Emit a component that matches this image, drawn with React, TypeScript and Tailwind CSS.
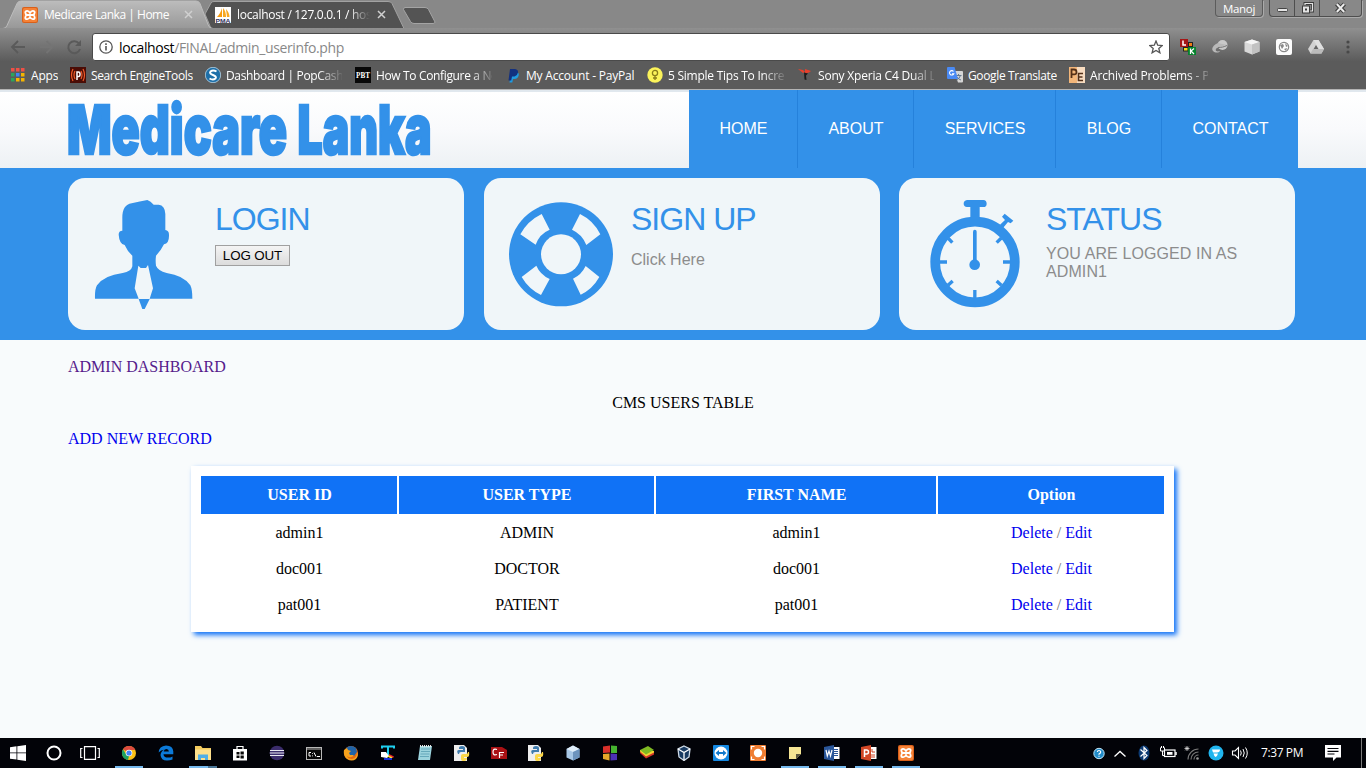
import React from "react";

const BLUE = "#3391e9";

/* ---------- Browser chrome ---------- */

function XamppIcon() {
  return (
    <svg width="16" height="16" viewBox="0 0 16 16">
      <rect width="16" height="16" rx="2" fill="#d9601a" />
      <rect x="1" y="1" width="14" height="14" rx="1.5" fill="#f58237" />
      <path
        d="M8 8H5.200Q3.300 7.500 3.300 5.600 3.300 3.800 5.200 3.800 7 3.800 8 6 9 3.800 10.800 3.800 12.700 3.800 12.700 5.600 12.700 7.500 10.800 8H5.200Q3.300 8.500 3.300 10.400 3.300 12.200 5.200 12.200 7 12.200 8 10 9 12.200 10.800 12.200 12.700 12.200 12.700 10.400 12.700 8.500 10.800 8"
        fill="none"
        stroke="#fff"
        strokeWidth="1.800"
      />
    </svg>
  );
}

function PmaIcon() {
  return (
    <svg width="16" height="16" viewBox="0 0 16 16">
      <rect width="16" height="16" fill="#fff" />
      <path d="M7 1v9H2C4 8 6 5 7 1z" fill="#f89c0e" />
      <path d="M8 1c2 2 3 5 3 9H8zM11 2c2 2 3.500 5 3.500 8H12z" fill="#f7a823" />
      <text x="0.500" y="15.700" fontSize="6" fontWeight="700" textLength="15" lengthAdjust="spacingAndGlyphs" fontFamily="Liberation Sans, sans-serif" fill="#32315c">PMA</text>
    </svg>
  );
}

function CloseX() {
  return (
    <svg width="9" height="9" viewBox="0 0 9 9">
      <path d="M1 1l7 7M8 1L1 8" stroke="#d0d0d0" strokeWidth="1.500" />
    </svg>
  );
}

function TabStrip() {
  return (
    <div className="relative flex h-[28px] bg-[#888888]">
      <svg className="absolute inset-0" width="1366" height="29" viewBox="0 0 1366 29">
        <defs>
          <linearGradient id="tab" x1="0" y1="0" x2="0" y2="1">
            <stop offset="0" stopColor="#bcbcbc" />
            <stop offset="1" stopColor="#989898" />
          </linearGradient>
        </defs>
        <path d="M0 28.500h5M211 28.500h1155" stroke="#a9a9a9" />
        <path d="M205 14l6-11q1-1.500 3-1.500h174q3 0 4 2L404 28.500H211z" fill="#525252" stroke="#a2a2a2" />
        <path d="M0 28.500h3q3 0 4-3L17 3.500q1-2.500 4-2.500h175q3 0 4 2.500l8 21q1 4 5 4" fill="url(#tab)" stroke="#bdbdbd" />
        <path d="M405 7.500h20q2.500 0 3.500 2l6.500 12.500q0 1.500-2 1.500h-19q-2.500 0-3.500-2l-7-12q0-2 1.500-2z" fill="#545454" stroke="#a4a4a4" />
      </svg>
      <div className="relative flex h-[29px] w-[211px] items-center pl-[22px] pr-[18px]">
        <XamppIcon />
        <span className="ml-[6px] grow whitespace-nowrap text-[12px] tracking-[-0.480px] text-white">Medicare Lanka | Home</span>
        <CloseX />
      </div>
      <div className="relative flex h-[29px] w-[190px] items-center pl-[4px] pr-[15px]">
        <PmaIcon />
        <span className="ml-[6px] w-[133px] overflow-hidden whitespace-nowrap text-[12px] tracking-[-0.300px] text-white [mask-image:linear-gradient(to_right,#000_112px,transparent_133px)]">
          localhost / 127.0.0.1 / host
        </span>
        <span className="ml-[7px] flex"><CloseX /></span>
      </div>
      <div className="relative ml-auto flex h-[17px] pr-[4px]">
        <div className="mr-[6px] flex w-[48px] items-center justify-center rounded-b-[4px] border border-t-0 border-[#5c5c5c] text-[11.500px] tracking-[-0.300px] text-white shadow-[1px_1px_0_#aaaaaa]">
          <span className="pt-[2px] leading-[14px]">Manoj</span>
        </div>
        <div className="flex w-[93px] rounded-b-[4px] border border-t-0 border-[#4e4e4e] shadow-[1px_1px_0_#aaaaaa]">
          <div className="flex w-[25px] items-center justify-center border-r border-[#4e4e4e]">
            <svg width="13" height="16" viewBox="0 0 13 16"><rect x="1.500" y="8.500" width="10" height="3" rx="1" fill="#e4e4e4" stroke="#444" /></svg>
          </div>
          <div className="flex w-[25px] items-center justify-center border-r border-[#4e4e4e]">
            <svg width="14" height="16" viewBox="0 0 14 16">
              <path d="M5 5V3.500h7.500V11H10" fill="none" stroke="#3c3c3c" strokeWidth="3" />
              <path d="M5 5V3.500h7.500V11H10" fill="none" stroke="#e4e4e4" strokeWidth="1.200" />
              <rect x="2.500" y="6" width="7" height="7" fill="#e4e4e4" stroke="#3c3c3c" />
              <rect x="5" y="8.500" width="2" height="2" fill="#3c3c3c" />
            </svg>
          </div>
          <div className="flex grow items-center justify-center">
            <svg width="13" height="16" viewBox="0 0 13 16">
              <path d="M2.500 4l8 8M10.500 4l-8 8" stroke="#3c3c3c" strokeWidth="4" />
              <path d="M2.800 4l7.400 8M10.200 4l-7.400 8" stroke="#ececec" strokeWidth="2" />
            </svg>
          </div>
        </div>
      </div>
    </div>
  );
}

function Toolbar() {
  return (
    <div className="relative flex h-[33px] items-center bg-gradient-to-b from-[#909090] to-[#5c5c5c] pt-[5px]">
      <svg className="ml-[10px]" width="76" height="18" viewBox="0 0 76 18">
        <path d="M15 9H2.500M8 3L2 9l6 6" fill="none" stroke="#5a5a5a" strokeWidth="1.800" />
        <path d="M30 9h12M36.500 3l6 6-6 6" fill="none" stroke="#747474" strokeWidth="1.800" />
        <path d="M69 5.500a6 6 0 1 0 1 5.500" fill="none" stroke="#5a5a5a" strokeWidth="2" />
        <path d="M71 2v6h-6z" fill="#5a5a5a" />
      </svg>
      <div className="ml-[6px] flex h-[28px] w-[1078px] items-center rounded-[3px] border border-[#4a4a4a] bg-white px-[6px]">
        <svg width="14" height="14" viewBox="0 0 14 14">
          <circle cx="7" cy="7" r="6.200" fill="none" stroke="#555" strokeWidth="1.300" />
          <path d="M7 6v4.500M7 3.300v1.600" stroke="#555" strokeWidth="1.600" />
        </svg>
        <span className="ml-[6px] grow whitespace-nowrap text-[14px] tracking-[-0.380px] text-[#888]">
          <span className="text-black">localhost</span>/FINAL/admin_userinfo.php
        </span>
        <svg width="14" height="14" viewBox="0 0 14 14">
          <path d="M7 1l1.700 4.200 4.600.3-3.500 2.900 1.100 4.400L7 10.400l-3.900 2.400 1.100-4.400L.7 5.500l4.600-.3z" fill="none" stroke="#555" strokeWidth="1.300" />
        </svg>
      </div>
      <div className="ml-[10px] flex gap-[16px]">
        <svg width="16" height="16" viewBox="0 0 16 16">
          <rect width="8" height="8" fill="#a51616" />
          <path d="M3 1.500V6h3" stroke="#fff" strokeWidth="1.500" fill="none" />
          <rect x="8.500" y="3.500" width="4" height="4" fill="#f27c13" stroke="#222" />
          <rect x="3.500" y="8.500" width="4.500" height="3.500" fill="#f7dc18" stroke="#222" />
          <rect x="8" y="8" width="8" height="8" fill="#07832e" />
          <path d="M10.500 9.500V15M14 9.500L11 12l3 3" stroke="#fff" strokeWidth="1.200" fill="none" />
        </svg>
        <svg width="16" height="16" viewBox="0 0 16 16">
          <circle cx="10.500" cy="6" r="5" fill="#c9c9c9" />
          <path d="M6 4C1 6-1 10 1 12s6 2 7 0c-3 1-5 0-4-2s7-3 11-4" fill="#b9b9b9" />
          <path d="M6 8.500c3 0 6-.500 9-2" stroke="#777" fill="none" />
        </svg>
        <svg width="16" height="16" viewBox="0 0 16 16">
          <path d="M8 .5l7.500 2.500v9.500L8 15.500.5 12.500V3z" fill="#d8d8d8" />
          <path d="M8 .5l7.500 2.500L8 5.500.5 3z" fill="#f5f5f5" />
          <path d="M8 5.500l7.500-2.500v9.500L8 15.500z" fill="#c2c2c2" />
        </svg>
        <svg width="16" height="16" viewBox="0 0 16 16">
          <rect width="16" height="16" rx="2" fill="#fcfcfc" />
          <circle cx="8" cy="8" r="4.700" fill="none" stroke="#888" strokeWidth="1.200" />
          <path d="M4 6l3-1 1 2-2 3zM9 4l3 3-2 1zM8 10l3-1-1 3z" fill="#888" />
        </svg>
        <svg width="16" height="16" viewBox="0 0 16 16">
          <path d="M5.500 1h5L16 10l-2.500 4.500h-11L0 10z" fill="#d2d2d2" />
          <path d="M10.500 1L16 10h-5L5.500 1z" fill="#e0e0e0" />
          <path d="M8 6l2.400 4H5.600z" fill="#666" />
          <path d="M2.500 14.500L5 10h11l-2.500 4.500z" fill="#bbb" />
        </svg>
      </div>
      <svg className="ml-[22px]" width="4" height="14" viewBox="0 0 4 14">
        <circle cx="2" cy="2" r="1.600" fill="#484848" />
        <circle cx="2" cy="7" r="1.600" fill="#484848" />
        <circle cx="2" cy="12" r="1.600" fill="#484848" />
      </svg>
    </div>
  );
}

const bm = "h-4 w-4 shrink-0";

const bookmarks = [
  {
    width: "w-[60px]",
    label: "Apps",
    text: "tracking-[-0.200px]",
    icon: (
      <svg className={bm} viewBox="0 0 16 16">
        <rect x="1" y="1" width="3.500" height="3.500" fill="#ef5046" />
        <rect x="6" y="1" width="3.500" height="3.500" fill="#ef5046" />
        <rect x="11" y="1" width="3.500" height="3.500" fill="#ef5046" />
        <rect x="1" y="6" width="3.500" height="3.500" fill="#2ca45a" />
        <rect x="6" y="6" width="3.500" height="3.500" fill="#4285f4" />
        <rect x="11" y="6" width="3.500" height="3.500" fill="#f5b400" />
        <rect x="1" y="11" width="3.500" height="3.500" fill="#2ca45a" />
        <rect x="6" y="11" width="3.500" height="3.500" fill="#f5b400" />
        <rect x="11" y="11" width="3.500" height="3.500" fill="#f5b400" />
      </svg>
    ),
  },
  {
    width: "w-[135px]",
    label: "Search EngineTools",
    text: "tracking-[-0.380px]",
    icon: (
      <svg className={bm} viewBox="0 0 16 16">
        <rect width="16" height="16" fill="#4a0d06" />
        <path d="M3 2Q0 8 3 14M5 4q-2 4 0 8M13 2q3 6 0 12M11 4q2 4 0 8" fill="none" stroke="#ef5a28" strokeWidth="1.200" />
        <path d="M7 13V5h1.500Q10 5 10 7.300T8.500 9.500H7" fill="none" stroke="#fff" strokeWidth="1.500" />
      </svg>
    ),
  },
  {
    width: "w-[150px]",
    label: "Dashboard | PopCash.net",
    text: "w-[116px] tracking-[-0.350px] [mask-image:linear-gradient(to_right,#000_92px,transparent_118px)]",
    icon: (
      <svg className={bm} viewBox="0 0 16 16">
        <circle cx="8" cy="8" r="7.700" fill="#1e6fa8" stroke="#cfe6f5" strokeWidth=".7" />
        <path d="M11.500 4.500Q8 2.500 5.500 4.500 4 6.500 8 8t2.500 3.500Q8 13.500 4.500 11.500" fill="none" stroke="#fff" strokeWidth="2" />
      </svg>
    ),
  },
  {
    width: "w-[150px]",
    label: "How To Configure a New",
    text: "w-[116px] tracking-[-0.350px] [mask-image:linear-gradient(to_right,#000_94px,transparent_120px)]",
    icon: (
      <svg className={bm} viewBox="0 0 16 16">
        <rect width="16" height="16" fill="#080808" />
        <text x="1" y="11" fontSize="8" fontWeight="700" textLength="14" lengthAdjust="spacingAndGlyphs" fontFamily="Liberation Serif, serif" fill="#fff">PBT</text>
      </svg>
    ),
  },
  {
    width: "w-[142px]",
    label: "My Account - PayPal",
    text: "tracking-[-0.200px]",
    icon: (
      <svg className={bm} viewBox="0 0 16 16">
        <path d="M6 5h6q2.500 1 1.500 4t-4 3H8l-.7 3.500H4.500z" fill="#1f9ae0" />
        <path d="M5 2h5q3.500.5 3 3.500T9.500 9.500H7l-.8 4H3.500z" fill="#12307f" />
      </svg>
    ),
  },
  {
    width: "w-[150px]",
    label: "5 Simple Tips To Increase",
    text: "w-[116px] tracking-[-0.250px] [mask-image:linear-gradient(to_right,#000_94px,transparent_120px)]",
    icon: (
      <svg className={bm} viewBox="0 0 16 16">
        <circle cx="8" cy="8" r="7.700" fill="#fbf35a" />
        <circle cx="8" cy="6" r="2.600" fill="none" stroke="#8a7d1a" strokeWidth="1.300" />
        <path d="M8 8.500V13M6 11h4" stroke="#8a7d1a" strokeWidth="1.300" />
      </svg>
    ),
  },
  {
    width: "w-[150px]",
    label: "Sony Xperia C4 Dual LTE",
    text: "w-[116px] tracking-[-0.200px] [mask-image:linear-gradient(to_right,#000_92px,transparent_120px)]",
    icon: (
      <svg className={bm} viewBox="0 0 16 16">
        <path d="M1 2l5 1 2 2-2 1zM8 2l6 2-2 1.500-4 1z" fill="#e8402c" />
        <path d="M7 5.500l4 1-2 2 .5 4.500-2-.5z" fill="#1c1c1c" />
      </svg>
    ),
  },
  {
    width: "w-[122px]",
    label: "Google Translate",
    text: "tracking-[-0.350px]",
    icon: (
      <svg className={bm} viewBox="0 0 16 16">
        <path d="M7 4h8q1 0 1 1v9.500q0 1-1 1h-4z" fill="#d6d6d6" />
        <path d="M8.500 8.500h6M11.500 7v1.500M13.500 8.500q-1 3-4 4.500M10 10q1 2 4 3" stroke="#64788f" fill="none" />
        <path d="M1 0h6.500l3.500 12H1q-1 0-1-1V1q0-1 1-1z" fill="#4a8af4" />
        <path d="M6.500 4.500a2.200 2.200 0 1 0 .3 2.200H5" fill="none" stroke="#fff" strokeWidth="1.100" />
      </svg>
    ),
  },
  {
    width: "w-[139px]",
    label: "Archived Problems - Project",
    text: "w-[118px] tracking-[-0.150px] [mask-image:linear-gradient(to_right,#000_96px,transparent_124px)]",
    icon: (
      <svg className={bm} viewBox="0 0 16 16">
        <rect width="16" height="16" fill="#f3b67a" />
        <rect x="8" width="8" height="16" fill="#f8dcc0" />
        <path d="M2.500 11V2.500H5Q7.500 2.500 7.500 5T5 7.300H3" fill="none" stroke="#543018" strokeWidth="1.800" />
        <path d="M14 6.500H9.500v7H14M9.500 10h4" fill="none" stroke="#543018" strokeWidth="1.600" />
      </svg>
    ),
  },
];

function Bookmarks() {
  return (
    <div className="flex h-[29px] items-center border-b border-[#b4b4b4] bg-[#5b5b5b] pl-[10px]">
      {bookmarks.map((b) => (
        <div key={b.label} className={`flex shrink-0 items-center gap-[5px] ${b.width}`}>
          {b.icon}
          <span className={`overflow-hidden whitespace-nowrap text-[12px] leading-[17px] text-white ${b.text}`}>{b.label}</span>
        </div>
      ))}
    </div>
  );
}

/* ---------- Web page ---------- */

const nav = [
  { label: "HOME", cls: "w-[109px] border-r" },
  { label: "ABOUT", cls: "w-[116px] border-r" },
  { label: "SERVICES", cls: "w-[142px] border-r" },
  { label: "BLOG", cls: "w-[106px] border-r" },
  { label: "CONTACT", cls: "w-[136px]" },
];

function SiteHeader() {
  return (
    <header className="flex h-[78px] justify-between border-t-2 border-[#e1e8ee] bg-gradient-to-b from-white via-[#f9fafc] to-[#edf1f4] pl-[68px] pr-[68px] font-['Liberation_Sans',sans-serif]">
      <svg
        className="mt-[6px]"
        width="370"
        height="68"
        viewBox="0 0 370 68"
        fontFamily="Inter, Roboto, sans-serif"
        fontWeight="900"
        fontSize="68"
        fill={BLUE}
        stroke={BLUE}
        strokeWidth="2.500"
      >
        <text x="-1" y="56" textLength="220" lengthAdjust="spacingAndGlyphs">Medicare</text>
        <text x="229.500" y="56" textLength="134" lengthAdjust="spacingAndGlyphs">Lanka</text>
      </svg>
      <nav className="-mt-[2px] flex h-[78px] bg-[#3391e9]">
        {nav.map((n) => (
          <a key={n.label} className={`flex items-center justify-center border-[#2581db] pb-[1px] pl-[1px] text-[16px] text-white ${n.cls}`}>
            {n.label}
          </a>
        ))}
      </nav>
    </header>
  );
}

function PersonIcon() {
  return (
    <svg width="100" height="111" viewBox="132 333 300 333" fill={BLUE}>
      <path d="M217 428V392Q216 350 245 346Q270 340 292 336Q302 340 311 350H326Q345 352 346 378V426Q357 428 357 440Q358 466 342 469Q334 486 318 503Q316 520 318 533Q324 548 350 555Q400 562 421 592Q427 604 427 632H299L309 601L294 531L288 540H272L265 533L254 601L266 632H135Q134 604 141 592Q162 562 218 555Q244 550 247 535V503Q232 490 224 471Q208 468 206 440Q206 428 217 428Z" />
      <path d="M266 633H299L284 663H277Z" />
    </svg>
  );
}

function LifeRingIcon() {
  return (
    <svg width="106" height="106" viewBox="114 339 318 318">
      <circle cx="273" cy="499" r="156" fill={BLUE} />
      <circle cx="273" cy="499" r="60" fill="#f0f6f9" />
      <g fill="#f0f6f9">
        <path d="M215 378L239 425Q209 437 197 470L151 439Q172 399 215 378Z" />
        <path d="M330 378L306 425Q337 439 349 471L391 439Q371 398 330 378Z" />
        <path d="M155 567L199 533Q210 559 239 573L213 621Q176 603 155 567Z" />
        <path d="M388 567L347 534Q334 561 309 572L332 620Q367 604 388 567Z" />
      </g>
    </svg>
  );
}

function StopwatchIcon() {
  return (
    <svg width="92" height="109" viewBox="147 333 276 327">
      <ellipse cx="285" cy="522" rx="119.500" ry="121" fill="none" stroke={BLUE} strokeWidth="29" />
      <path d="M271 395V357H261Q251 356 251 347T261 336H310Q320 337 320 347T310 357H299V395Z" fill={BLUE} />
      <path d="M360 410L375 396L366 386L374 377L400 398L392 406L384 402L369 420Z" fill={BLUE} />
      <path d="M284.500 431V520" stroke={BLUE} strokeWidth="11" strokeLinecap="round" />
      <circle cx="284" cy="530" r="16" fill={BLUE} />
      <path
        d="M179 522H201M369 522H391M284.500 606V630M205 451L217 464M364 450L350 464M204 592L218 579M364 592L350 579"
        stroke={BLUE}
        strokeWidth="10"
      />
    </svg>
  );
}

function Card({ icon, iconCls, title, cls, children }: { icon: React.ReactNode; iconCls: string; title: string; cls: string; children: React.ReactNode }) {
  return (
    <section className={`flex h-[152px] w-[396px] shrink-0 rounded-[17px] bg-[#f0f6f9] ${cls}`}>
      <div className={`w-[147px] shrink-0 ${iconCls}`}>{icon}</div>
      <div className="pt-[23px]">
        <h2 className="text-[32px] leading-[37px] tracking-[-1px] text-[#3391e9]">{title}</h2>
        {children}
      </div>
    </section>
  );
}

function Banner() {
  return (
    <div className="flex h-[172px] bg-[#3391e9] pl-[68px] pt-[10px] font-['Liberation_Sans',sans-serif]">
      <Card cls="" icon={<PersonIcon />} iconCls="pl-[26px] pt-[21px]" title="LOGIN">
        <button className="mt-[7px] flex h-[21px] w-[75px] items-center justify-center whitespace-nowrap border border-[#a0a0a0] bg-gradient-to-b from-[#f4f4f4] to-[#dcdcdc] text-[13.333px] tracking-[-0.100px] text-black">
          LOG OUT
        </button>
      </Card>
      <Card cls="ml-[20px]" icon={<LifeRingIcon />} iconCls="pl-[24px] pt-[23px]" title="SIGN UP">
        <p className="mt-[13px] text-[16px] leading-[18px] text-[#8c8c8c]">Click Here</p>
      </Card>
      <Card cls="ml-[19px]" icon={<StopwatchIcon />} iconCls="pl-[30px] pt-[21px]" title="STATUS">
        <p className="mt-[7px] w-[200px] text-[16px] leading-[18px] tracking-[0.100px] text-[#8c8c8c]">YOU ARE LOGGED IN AS ADMIN1</p>
      </Card>
    </div>
  );
}

const users = [
  ["admin1", "ADMIN"],
  ["doc001", "DOCTOR"],
  ["pat001", "PATIENT"],
];

const cols = "grid grid-cols-[196px_255px_280px_226px] gap-x-[2px] text-center";

function UsersTable() {
  return (
    <div className="ml-[191px] mt-[18px] h-[166px] w-[983px] bg-white p-[10px] shadow-[3px_3px_5px_#1072f6]">
      <div className={`${cols} font-bold leading-[38px] text-white`}>
        {["USER ID", "USER TYPE", "FIRST NAME", "Option"].map((h) => (
          <div key={h} className="bg-[#1072f6] pl-[1px]">{h}</div>
        ))}
      </div>
      <div className="mt-[1px] pl-[0.500px]">
        {users.map(([id, type]) => (
          <div key={id} className={`${cols} leading-[36px] text-black`}>
            <div>{id}</div>
            <div>{type}</div>
            <div>{id}</div>
            <div className="text-[#777]">
              <a className="text-[#0000ee]">Delete</a> / <a className="text-[#0000ee]">Edit</a>
            </div>
          </div>
        ))}
      </div>
    </div>
  );
}

/* ---------- Taskbar ---------- */

const ti = "h-4 w-4";

const python = (
  <svg className={ti} viewBox="0 0 16 16">
    <path d="M0 0h10l3 3v13H0z" fill="#eee" />
    <path d="M5 3q0-2 3-2t3 2v4H7q-2 0-2 2H4Q2 5 5 5h4V4H5z" fill="#3f7cae" />
    <path d="M15 7q1 5-2 5h-3v1h3q0 3-3 3t-3-2v-3q0-2 2-2h3q2 0 2-2z" fill="#fbd748" />
  </svg>
);

const apps: { icon: React.ReactNode; bar?: string }[] = [
  {
    bar: "bg-[#76b9ed]",
    icon: (
      <svg className={ti} viewBox="0 0 16 16">
        <circle cx="8" cy="8" r="7" fill="#fbc116" />
        <path d="M8 8L2 4.300A7 7 0 0 1 14.300 5H8z" fill="#dd4b3e" />
        <path d="M2 4.300L5.500 10 8 11 7 15A7 7 0 0 1 2 4.300z" fill="#1ca261" />
        <circle cx="8" cy="8" r="3.300" fill="#fff" />
        <circle cx="8" cy="8" r="2.600" fill="#4384f3" />
      </svg>
    ),
  },
  {
    icon: (
      <svg className={ti} viewBox="0 0 16 16">
        <path d="M.7 7.500Q1 1 8 .5q7 0 7.300 6v2.700H5.500q.2 3.400 4.500 3.400 2.500 0 4.500-1.200v3Q12 15.500 9 15.500q-6 0-6.500-5.500Q2.800 6.500 6 4.700 3 4.700.7 7.500zM5.700 6.500h5.200q-.1-2.500-2.500-2.500T5.700 6.500z" fill="#0c7ad8" />
      </svg>
    ),
  },
  {
    bar: "bg-[linear-gradient(to_right,#76b9ed_19px,#4a7697_19px)]",
    icon: (
      <svg className={ti} viewBox="0 0 16 16">
        <path d="M0 1h6l1.500 2H16v12H0z" fill="#f3cb5e" />
        <path d="M0 4.500h16V15H0z" fill="#fde08c" />
        <path d="M3 15V9.500h10V15h-3v-2H6v2z" fill="#4faee6" />
      </svg>
    ),
  },
  {
    icon: (
      <svg className={ti} viewBox="0 0 16 16">
        <path d="M1 4h14v11.500H1z" fill="#fff" />
        <path d="M5 4V1.500h6V4" fill="none" stroke="#fff" strokeWidth="1.200" />
        <path d="M4.500 7h3v2.500h-3zM8.500 6.500h3.300v3H8.500zM4.500 10.500h3V13h-3zM8.500 10.500h3.300v3H8.500z" fill="#080808" />
      </svg>
    ),
  },
  {
    icon: (
      <svg className={ti} viewBox="0 0 16 16">
        <circle cx="8" cy="8" r="7.300" fill="#3b2d6c" />
        <path d="M1 5.500h14M.8 8h14.400M1 10.500h14" stroke="#e8e8f0" strokeWidth="1.200" />
      </svg>
    ),
  },
  {
    icon: (
      <svg className={ti} viewBox="0 0 16 16">
        <rect x=".5" y="2.500" width="15" height="12" fill="#080808" stroke="#b8b8b8" />
        <path d="M1 4h14" stroke="#b8b8b8" />
        <path d="M5 7.500H3v3.500h2M6.500 8v.8M6.500 10.500v.8M8 7.500l2 4M11 11.500h3" stroke="#fff" fill="none" />
      </svg>
    ),
  },
  {
    icon: (
      <svg className={ti} viewBox="0 0 16 16">
        <circle cx="8" cy="8" r="7" fill="#e66a11" />
        <path d="M3 3Q8-1 13 3l1 4-3 4H6L4 7z" fill="#2063a6" />
        <path d="M1 5l3-2 1 2 3 1-2 2 1 2 4 0Q8 14 4 11 5 14 9 14q5-1 5-7 2 4-1 7-4 3-9 0Q0 11 1 5z" fill="#f7a21c" />
      </svg>
    ),
  },
  {
    icon: (
      <svg className={ti} viewBox="0 0 16 16">
        <path d="M2 3.500V1.500h12V3.500M8 1.500V12" stroke="#1ed0f0" strokeWidth="2" fill="none" />
        <path d="M1 7h5l3 4-2 2-6-1z" fill="#fff" />
        <path d="M9 9l5 2.500-1 1.500-4-2z" fill="#e8252a" />
        <path d="M8 11l4 2" stroke="#fae82c" strokeWidth="1.500" />
        <path d="M4 14h8" stroke="#1730d8" strokeWidth="2" />
      </svg>
    ),
  },
  {
    icon: (
      <svg className={ti} viewBox="0 0 16 16">
        <path d="M3 1h12l-2 14H1z" fill="#9bd3dd" />
        <path d="M4 4h9M4 6.500h9M3.500 9h9M3 11.500h9" stroke="#4d97ac" strokeWidth=".7" />
        <path d="M3 1h12" stroke="#e8e8e8" strokeWidth="2" strokeDasharray="1 1" />
      </svg>
    ),
  },
  { icon: python },
  {
    icon: (
      <svg className={ti} viewBox="0 0 16 16">
        <path d="M0 2h11l5 3v9H0z" fill="#a91114" />
        <path d="M6 4.500Q2 3 2 7t4 2.500M8.500 13V7.500H13M8.500 10h3.500" fill="none" stroke="#fff" strokeWidth="1.200" />
      </svg>
    ),
  },
  { icon: python },
  {
    icon: (
      <svg className={ti} viewBox="0 0 16 16">
        <path d="M8 .5L14.500 4v8.500L8 15.500 1.500 12.500V4z" fill="#a8c8e6" />
        <path d="M8 .5L14.500 4 8 7 1.500 4z" fill="#e0eefa" />
        <path d="M8 7l6.500-3v8.500L8 15.500z" fill="#6d94bd" />
      </svg>
    ),
  },
  {
    icon: (
      <svg className={ti} viewBox="0 0 16 16">
        <path d="M1 1.500l7-1v7L1 8z" fill="#d9302a" />
        <path d="M9 .5l6 .5v7H9z" fill="#45b32f" />
        <path d="M1 9l6.500-.5v7L1 14z" fill="#e7a82a" />
        <path d="M8.500 8.500l6.500.5v6l-6.500.5z" fill="#4b30b5" />
      </svg>
    ),
  },
  {
    icon: (
      <svg className={ti} viewBox="0 0 16 16">
        <path d="M1 8l6 5.500 8-4V7H1z" fill="#d33227" />
        <path d="M1 6.500L7 11.500l8-4V6L1 5z" fill="#f3d331" />
        <path d="M1 5L9 1l6 4-8 4.500z" fill="#7fba22" />
      </svg>
    ),
  },
  {
    icon: (
      <svg className={ti} viewBox="0 0 16 16">
        <path d="M8 1l6 3-1 8-5 3.500L3 12 2 4z" fill="#183a61" stroke="#cfdbe8" strokeWidth="1.300" />
        <path d="M2 4l6 3.500L14 4M8 7.500v8" fill="none" stroke="#fff" strokeWidth="1.300" />
      </svg>
    ),
  },
  {
    icon: (
      <svg className={ti} viewBox="0 0 16 16">
        <rect width="16" height="16" rx="1" fill="#1589e2" />
        <circle cx="8" cy="8" r="6.500" fill="#fff" />
        <path d="M2.500 8l3.500-3v2h4V5l3.500 3-3.500 3V9H6v2z" fill="#1279cc" />
      </svg>
    ),
  },
  {
    icon: (
      <svg className={ti} viewBox="0 0 16 16">
        <rect width="16" height="16" rx="1" fill="#ef7d32" />
        <circle cx="8" cy="8" r="4.200" fill="#fff" />
        <path d="M1.500 4.500v-3h3M11.500 1.500h3v3M14.500 11.500v3h-3M4.500 14.500h-3v-3" fill="none" stroke="#fff" strokeWidth="1.200" />
      </svg>
    ),
  },
  {
    bar: "bg-[#76b9ed]",
    icon: (
      <svg className={ti} viewBox="0 0 16 16">
        <path d="M2 2h12v7l-5 5H2z" fill="#f5e594" />
        <path d="M9 14V9h5z" fill="#5a5640" />
      </svg>
    ),
  },
  {
    bar: "bg-[#76b9ed]",
    icon: (
      <svg className={ti} viewBox="0 0 16 16">
        <path d="M9 2h6.500v12H9z" fill="#fff" />
        <path d="M10 4.500h4M10 6.500h4M10 8.500h4M10 10.500h4" stroke="#2a5699" />
        <path d="M0 2l10-2v16L0 14z" fill="#2a5699" />
        <path d="M2 5l1.300 6L5 6l1.500 5L8 5" fill="none" stroke="#fff" strokeWidth="1.200" />
      </svg>
    ),
  },
  {
    bar: "bg-[#76b9ed]",
    icon: (
      <svg className={ti} viewBox="0 0 16 16">
        <path d="M9 2h6.500v12H9z" fill="#fff" />
        <path d="M10 10h4M10 12h4M11 4v3h3" stroke="#d24726" fill="none" />
        <path d="M0 2l10-2v16L0 14z" fill="#d24726" />
        <path d="M3.500 12V5H5.500Q7.500 5 7.500 7T5.500 9H4" fill="none" stroke="#fff" strokeWidth="1.500" />
      </svg>
    ),
  },
  { bar: "bg-[#76b9ed]", icon: <XamppIcon /> },
];

function Taskbar() {
  return (
    <div className="flex h-[30px] bg-[#020308]">
      <div className="flex h-[30px] w-[36px] items-center justify-center">
        <svg width="16" height="16" viewBox="0 0 16 16" fill="#fff">
          <path d="M0 2.300L6.500 1.300V7.500H0zM7.300 1.200L16 0v7.500H7.300zM0 8.300h6.500v6.300L0 13.700zM7.300 8.300H16V16l-8.700-1.300z" />
        </svg>
      </div>
      <div className="flex w-[36px] items-center justify-center">
        <svg width="16" height="16" viewBox="0 0 16 16"><circle cx="8" cy="8" r="6.500" fill="none" stroke="#fff" strokeWidth="2" /></svg>
      </div>
      <div className="flex w-[38px] items-center justify-center pr-[2px]">
        <svg width="20" height="14" viewBox="0 0 20 14">
          <path d="M4.500.7h11v12.600h-11zM2.500 2.500H.7v9h1.800M17.500 2.500h1.800v9h-1.800" fill="none" stroke="#fff" strokeWidth="1.200" />
        </svg>
      </div>
      {apps.map((a, i) => (
        <div key={i} className="flex w-[37px] shrink-0 flex-col items-center pl-[1px]">
          <div className="flex h-[28px] items-center pt-[2px]">{a.icon}</div>
          <div className={`h-[2px] w-[28px] ${a.bar ?? ""}`} />
        </div>
      ))}
      <div className="ml-auto flex items-center">
        <svg width="160" height="20" viewBox="0 0 160 20" className="mr-[10px]">
          <circle cx="8" cy="10.500" r="5.200" fill="#218cc9" stroke="#c3e5f5" />
          <path d="M6.300 9q.2-1.500 1.700-1.500t1.700 1.400Q9.700 10 8 11v.7M8 12.700v1" fill="none" stroke="#fff" strokeWidth="1.200" />
          <path d="M23.500 13.500l5.500-5 5.500 5" fill="none" stroke="#fff" strokeWidth="1.300" />
          <ellipse cx="53" cy="10" rx="5.500" ry="7.500" fill="#0c3a72" />
          <path d="M49.500 6.500l6.500 6-3 3V4.500l3 3-6.500 6" fill="none" stroke="#fff" strokeWidth="1.200" />
          <rect x="73.500" y="7" width="10.500" height="6.500" fill="none" stroke="#fff" strokeWidth="1.200" />
          <path d="M85 9v3" stroke="#fff" strokeWidth="1.500" />
          <rect x="76" y="9" width="5.500" height="2.800" fill="#fff" />
          <path d="M69.500 4.500V8h4V4.500M70.500 3v2M72.500 3v2M71.500 8v4.500h2.500" fill="none" stroke="#fff" />
          <path d="M93.500 5.500h5M96 3v5M94.200 3.700l3.600 3.600M97.800 3.700l-3.600 3.600" stroke="#ddd" strokeWidth=".8" />
          <path d="M97 16.500A10.500 10.500 0 0 1 107.500 6M100 16.500A7.500 7.500 0 0 1 107.500 9M103 16.500A4.500 4.500 0 0 1 107.500 12" fill="none" stroke="#777" strokeWidth="1.200" />
          <circle cx="106.500" cy="15.500" r="1.300" fill="#999" />
          <circle cx="125" cy="10" r="7.500" fill="#20b5ee" />
          <path d="M121 6.500h8q0 3-3 3h-4zM122.500 10.500h4.500q-.5 2.500-2.500 3.500-1.500-1-2-3.500z" fill="#fff" />
          <path d="M141.500 8h2.500l3.500-3.500v11L144 12h-2.500z" fill="none" stroke="#fff" strokeWidth="1.100" />
          <path d="M149.500 7.500q1.500 2.500 0 5M152 6q2.500 4 0 8M154.500 4.500q3.500 5.500 0 11" fill="none" stroke="#fff" />
        </svg>
        <span className="w-[43px] whitespace-nowrap text-[12px] tracking-[-0.400px] text-white">7:37 PM</span>
        <svg className="ml-[21px]" width="16" height="16" viewBox="0 0 16 16">
          <path d="M0 0h16v12.500h-4.500L8 16v-3.500H0z" fill="#fff" />
          <path d="M2.500 3.500h11M2.500 6.300h11M2.500 9h7" stroke="#020308" strokeWidth="1.200" />
        </svg>
        <div className="ml-[20px] mr-[4px] h-[30px] w-[1px] bg-[#7a7a7a]" />
      </div>
    </div>
  );
}

export default function App() {
  return (
    <div className="flex h-[768px] w-[1366px] flex-col overflow-hidden bg-[#f8fbfc] font-['Open_Sans','Noto_Sans',sans-serif]">
      <TabStrip />
      <Toolbar />
      <Bookmarks />
      <SiteHeader />
      <Banner />
      <main className="grow bg-[#f8fbfc] pt-[18px] font-['Liberation_Serif',serif] text-[16px] leading-[18px]">
        <p className="pl-[68px] text-[#551a8b]">ADMIN DASHBOARD</p>
        <p className="mt-[18px] text-center text-black">CMS USERS TABLE</p>
        <p className="mt-[18px] pl-[68px] text-[#0000ee]">ADD NEW RECORD</p>
        <UsersTable />
      </main>
      <Taskbar />
    </div>
  );
}
